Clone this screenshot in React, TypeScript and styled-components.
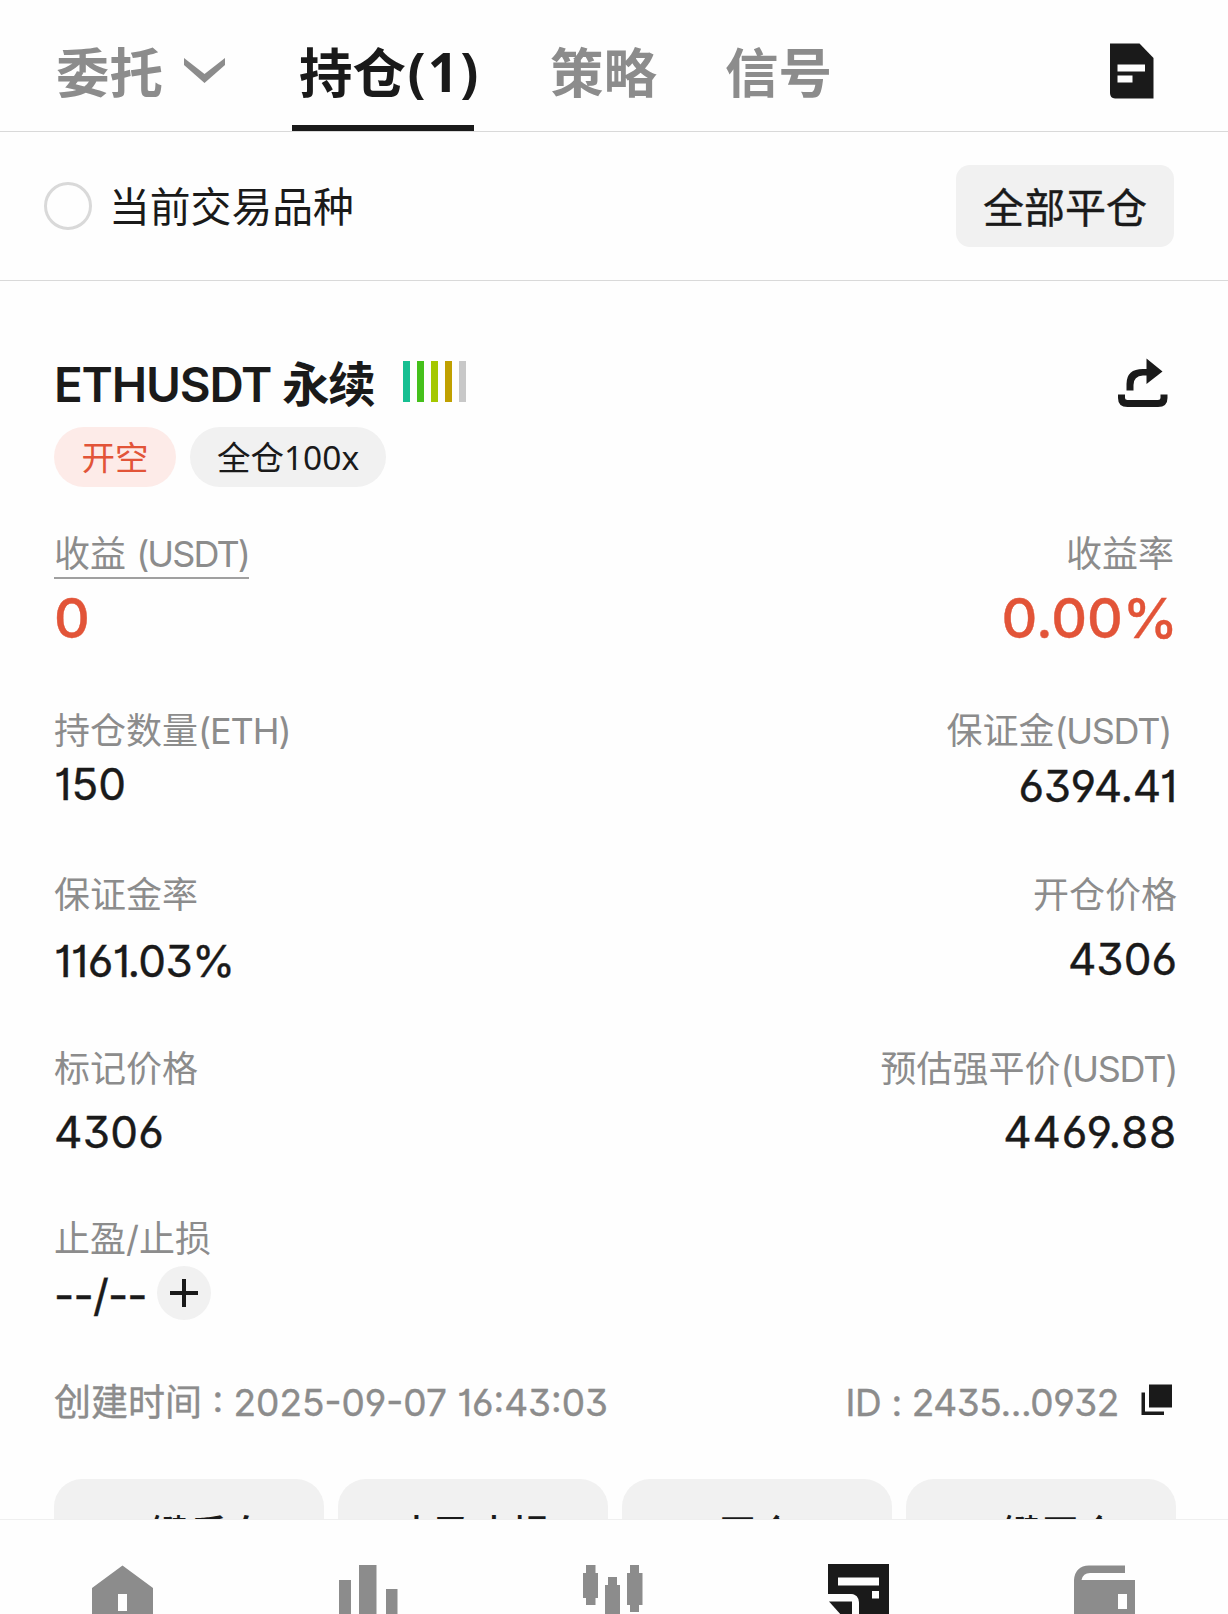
import React from "react";
import styled, { createGlobalStyle } from "styled-components";

const INK = "#1a1a1a";
const GREY = "#8c8c8c";
const RED = "#e25438";
const FILL = "#f1f1f1";

const GlobalStyle = createGlobalStyle`
  * { box-sizing: border-box; }
  body { margin: 0; background: #fefefe; }
`;

const Screen = styled.div`
  display: flex;
  flex-direction: column;
  width: 1228px;
  height: 1614px;
  overflow: hidden;
  background: #fefefe;
  color: ${INK};
  font-family: Inter, "Noto Sans CJK SC", sans-serif;
  font-feature-settings: "cv01", "cv03", "cv04", "cv09";
  white-space: nowrap;
`;

const Header = styled.header`
  display: flex;
  align-items: stretch;
  flex: none;
  height: 132px;
  padding: 0 74px 0 56px;
  border-bottom: 1px solid #d9d9d9;
`;

const Tab = styled.div<{ $active?: boolean; $before?: number; $w: number }>`
  display: flex;
  align-items: center;
  gap: 21px;
  width: ${(p) => p.$w}px;
  margin-left: ${(p) => p.$before ?? 0}px;
  padding: 20px 0 0 ${(p) => (p.$active ? 7 : 0)}px;
  border-bottom: 6px solid ${(p) => (p.$active ? INK : "transparent")};
  color: ${(p) => (p.$active ? INK : GREY)};
  font-family: "Noto Sans", "Noto Sans CJK SC", sans-serif;
  font-size: 53.5px;
  font-weight: 700;
  line-height: 64px;

  svg { margin-top: -4px; }
`;

const Count = styled.span`
  margin-left: -19.5px;
  padding-bottom: 2px;
  letter-spacing: 2px;
`;

const HeaderIcon = styled.div`
  display: flex;
  margin: 43px 0 0 auto;
`;

const FilterBar = styled.section`
  display: flex;
  align-items: center;
  justify-content: space-between;
  flex: none;
  height: 149px;
  padding: 0 54px 0 44px;
  border-bottom: 1px solid #d9d9d9;
`;

const FilterOption = styled.label`
  display: flex;
  align-items: center;
  gap: 17px;
  font-size: 40.8px;
  line-height: 50px;
`;

const FilterText = styled.span`
  padding-top: 2px;
`;

const Radio = styled.span`
  width: 48px;
  height: 48px;
  border: 3px solid #d9d9d9;
  border-radius: 50%;
`;

const CloseAll = styled.button`
  width: 218px;
  height: 82px;
  padding: 4px 0 0;
  border: 0;
  border-radius: 14px;
  background: ${FILL};
  color: ${INK};
  font: 400 41px/50px Inter, "Noto Sans CJK SC", sans-serif;
  -webkit-text-stroke: 0.4px ${INK};
`;

const Position = styled.main`
  flex: 1;
  min-height: 0;
  overflow: hidden;
  padding: 74px 52px 0 54px;
`;

const TitleRow = styled.div`
  display: flex;
  align-items: center;
  height: 60px;
`;

const Title = styled.h1`
  margin: 0;
  font-size: 47.5px;
  font-weight: 600;
  line-height: 60px;
  letter-spacing: -1.2px;
`;

const Levels = styled.div`
  display: flex;
  gap: 7px;
  margin: -7px 0 0 28px;
`;

const Level = styled.span<{ $color: string }>`
  width: 7px;
  height: 41px;
  background: ${(p) => p.$color};
`;

const ShareIcon = styled.div`
  display: flex;
  margin: -4px 8px 0 auto;
`;

const Tags = styled.div`
  display: flex;
  gap: 14px;
  margin: 12px 0 44px;
`;

const Tag = styled.span<{ $short?: boolean }>`
  display: flex;
  align-items: center;
  justify-content: center;
  width: ${(p) => (p.$short ? 122 : 196)}px;
  height: 60px;
  border-radius: 30px;
  background: ${(p) => (p.$short ? "#fdebe8" : FILL)};
  color: ${(p) => (p.$short ? RED : INK)};
  font-family: "Noto Sans", "Noto Sans CJK SC", sans-serif;
  font-size: 33.5px;
  line-height: 60px;
`;

const MetricRow = styled.div<{ $h: number }>`
  display: flex;
  justify-content: space-between;
  height: ${(p) => p.$h}px;
`;

const Metric = styled.div<{ $end?: boolean }>`
  display: flex;
  flex-direction: column;
  align-items: ${(p) => (p.$end ? "flex-end" : "flex-start")};
`;

const Label = styled.div<{ $line?: boolean; $inset?: number }>`
  height: ${(p) => (p.$line ? 48 : 44)}px;
  margin-right: ${(p) => p.$inset ?? 0}px;
  padding-top: 1px;
  border-bottom: ${(p) => (p.$line ? `2px solid #a0a0a0` : "0")};
  color: ${GREY};
  font-size: 36px;
  line-height: 44px;
`;

const Latin = styled.span<{ $ls: number }>`
  letter-spacing: ${(p) => p.$ls}px;
`;

const Value = styled.div<{ $top: number; $big?: boolean; $ls?: number; $shift?: number }>`
  display: flex;
  align-items: center;
  height: 56px;
  margin-top: ${(p) => p.$top}px;
  margin-right: ${(p) => -(p.$shift ?? 0)}px;
  color: ${(p) => (p.$big ? RED : INK)};
  font-size: ${(p) => (p.$big ? 55.5 : 44)}px;
  font-weight: ${(p) => (p.$big ? 500 : 400)};
  line-height: 56px;
  letter-spacing: ${(p) => p.$ls ?? 0}px;
  -webkit-text-stroke: 0.4px currentColor;
`;

const Dashes = styled.span`
  padding-top: 3px;
  letter-spacing: -0.8px;
`;

const AddButton = styled.button`
  display: flex;
  align-items: center;
  justify-content: center;
  width: 54px;
  height: 54px;
  margin-left: 10px;
  padding: 0;
  border: 0;
  border-radius: 50%;
  background: ${FILL};
`;

const Meta = styled.div`
  display: flex;
  justify-content: space-between;
  height: 99px;
  padding: 1px 3px 0 0;
  color: ${GREY};
  font-size: 37px;
  line-height: 44px;
  -webkit-text-stroke: 0.4px currentColor;
`;

const MetaItem = styled.div<{ $ls?: number }>`
  display: flex;
  align-items: flex-start;
  letter-spacing: ${(p) => p.$ls ?? 0}px;

  svg { margin: 3px 0 0 22px; }
`;

const Actions = styled.div`
  display: grid;
  grid-template-columns: repeat(4, 1fr);
  gap: 14px;
`;

const Action = styled.button`
  height: 110px;
  padding: 0;
  border: 0;
  border-radius: 28px;
  background: ${FILL};
  color: ${INK};
  font: 500 38.8px/110px Inter, "Noto Sans CJK SC", sans-serif;
`;

const NavBar = styled.nav`
  display: grid;
  grid-template-columns: repeat(5, 1fr);
  justify-items: center;
  flex: none;
  height: 95px;
  padding-top: 44px;
  border-top: 1px solid #efefef;
  overflow: hidden;
`;

const metrics = [
  { h: 164, l: "持仓数量", lu: "(ETH)", lv: "150", lt: 4, r: "保证金", ru: "(USDT)", rv: "6394.41", rt: 6, inset: 5, rs: -0.4 },
  { h: 174, l: "保证金率", lv: "1161.03%", lt: 17, ls: -0.7, r: "开仓价格", rv: "4306", rt: 15, inset: -1 },
  { h: 170, l: "标记价格", lv: "4306", lt: 14, ls: 0.3, r: "预估强平价", ru: "(USDT)", rv: "4469.88", rt: 14, inset: -1, rs: 0.8 },
];

export default function App() {
  return (
    <Screen>
      <GlobalStyle />
      <Header>
        <Tab $w={170}>
          委托
          <svg width="42" height="26" viewBox="0 0 42 26">
            <path d="M0 0 20.500 16 41 0V7L20.500 25 0 7Z" fill={GREY} />
          </svg>
        </Tab>
        <Tab $active $before={66} $w={182}>持仓<Count>(1)</Count></Tab>
        <Tab $before={76} $w={106}>策略</Tab>
        <Tab $before={69} $w={106}>信号</Tab>
        <HeaderIcon>
          <svg width="44" height="56" viewBox="0 0 44 56">
            <path d="M0 .5H29.5L43.5 15V55.5H5Q0 55 0 50Z" fill={INK} />
            <path d="M7.5 21.5H35V28.5H7.5ZM7.5 32.5H22.5V39.5H7.5Z" fill="#fefefe" />
          </svg>
        </HeaderIcon>
      </Header>

      <FilterBar>
        <FilterOption><Radio /><FilterText>当前交易品种</FilterText></FilterOption>
        <CloseAll>全部平仓</CloseAll>
      </FilterBar>

      <Position>
        <TitleRow>
          <Title>ETHUSDT 永续</Title>
          <Levels>
            {["#17bf92", "#45c01b", "#a5c800", "#c0a000", "#c8c8c8"].map((c) => (
              <Level key={c} $color={c} />
            ))}
          </Levels>
          <ShareIcon>
            <svg width="50" height="50" viewBox="0 0 50 50">
              <path d="M28.5 0.5 44.5 13.5 28.5 26V17.5H25Q15.500 18 15.500 27V32.500H8.500V26Q8.500 11 25 11H28.500Z" fill={INK} />
              <path d="M3.500 36.500V40Q3.500 45.500 9.500 45.500H40Q46 45.500 46 40V36.500" fill="none" stroke={INK} strokeWidth="7" />
            </svg>
          </ShareIcon>
        </TitleRow>
        <Tags>
          <Tag $short>开空</Tag>
          <Tag>全仓100x</Tag>
        </Tags>

        <MetricRow $h={177}>
          <Metric>
            <Label $line>收益 <Latin $ls={-1.9}>(USDT)</Latin></Label>
            <Value $big $top={11}>0</Value>
          </Metric>
          <Metric $end>
            <Label $inset={2}>收益率</Label>
            <Value $big $top={15} $shift={2}>0.00%</Value>
          </Metric>
        </MetricRow>
        {metrics.map((m) => (
          <MetricRow key={m.l} $h={m.h}>
            <Metric>
              <Label>{m.l}<Latin $ls={-1.1}>{m.lu}</Latin></Label>
              <Value $top={m.lt} $ls={m.ls}>{m.lv}</Value>
            </Metric>
            <Metric $end>
              <Label $inset={m.inset}>{m.r}<Latin $ls={-1.3}>{m.ru}</Latin></Label>
              <Value $top={m.rt} $ls={m.rs} $shift={1}>{m.rv}</Value>
            </Metric>
          </MetricRow>
        ))}
        <MetricRow $h={164}>
          <Metric>
            <Label>止盈/止损</Label>
            <Value $top={5}>
              <Dashes>--/--</Dashes>
              <AddButton>
                <svg width="28" height="28" viewBox="0 0 28 28">
                  <path d="M12 0h4v12h12v4H16v12h-4V16H0v-4h12z" fill={INK} />
                </svg>
              </AddButton>
            </Value>
          </Metric>
        </MetricRow>

        <Meta>
          <MetaItem>创建时间 : 2025-09-07 16:43:03</MetaItem>
          <MetaItem $ls={-0.4}>
            ID : 2435...0932
            <svg width="32" height="32" viewBox="0 0 32 32">
              <path d="M8 .5H31V23.500H8ZM.5 8.500H4V27.500H23V31H.5Z" fill={INK} />
            </svg>
          </MetaItem>
        </Meta>

        <Actions>
          <Action>一键反向</Action>
          <Action>止盈止损</Action>
          <Action>平仓</Action>
          <Action>一键平仓</Action>
        </Actions>
      </Position>

      <NavBar>
        <svg width="62" height="62" viewBox="0 0 62 62">
          <path fillRule="evenodd" d="M0 24 30.500 1.500 61 24V62H0ZM26 30V47H35V30Z" fill={GREY} />
        </svg>
        <svg width="60" height="62" viewBox="0 0 60 62">
          <path d="M1 16H13V62H1ZM21 1H38.500V62H21ZM48 25H59.500V62H48Z" fill={GREY} />
        </svg>
        <svg width="62" height="62" viewBox="0 0 62 62">
          <path d="M3 1H12.500V9H15V34H12.500V41H3V34H0V9H3ZM25 13H34V21H37V62H22V21H25ZM47 1H56V9H59.500V41H56V48H47V41H44V9H47Z" fill={GREY} />
        </svg>
        <svg width="63" height="62" viewBox="0 0 63 62">
          <path d="M0 0H61V62H31V44Q31 30 22 30H0Z" fill={INK} />
          <path d="M0 30H22Q31 30 31 39V62H0Z" fill="#fefefe" />
          <path d="M1 37.500H24V62H23Z" fill={INK} />
          <path d="M10 13.500H51V21.500H10ZM44 27H51V34.500H44Z" fill="#fefefe" />
        </svg>
        <svg width="62" height="62" viewBox="0 0 62 62">
          <path fillRule="evenodd" d="M0 62V16Q1 2 15 1.500H51V9H16Q9 9 7.500 16H61V62ZM44 30V45H53V30Z" fill={GREY} />
        </svg>
      </NavBar>
    </Screen>
  );
}
